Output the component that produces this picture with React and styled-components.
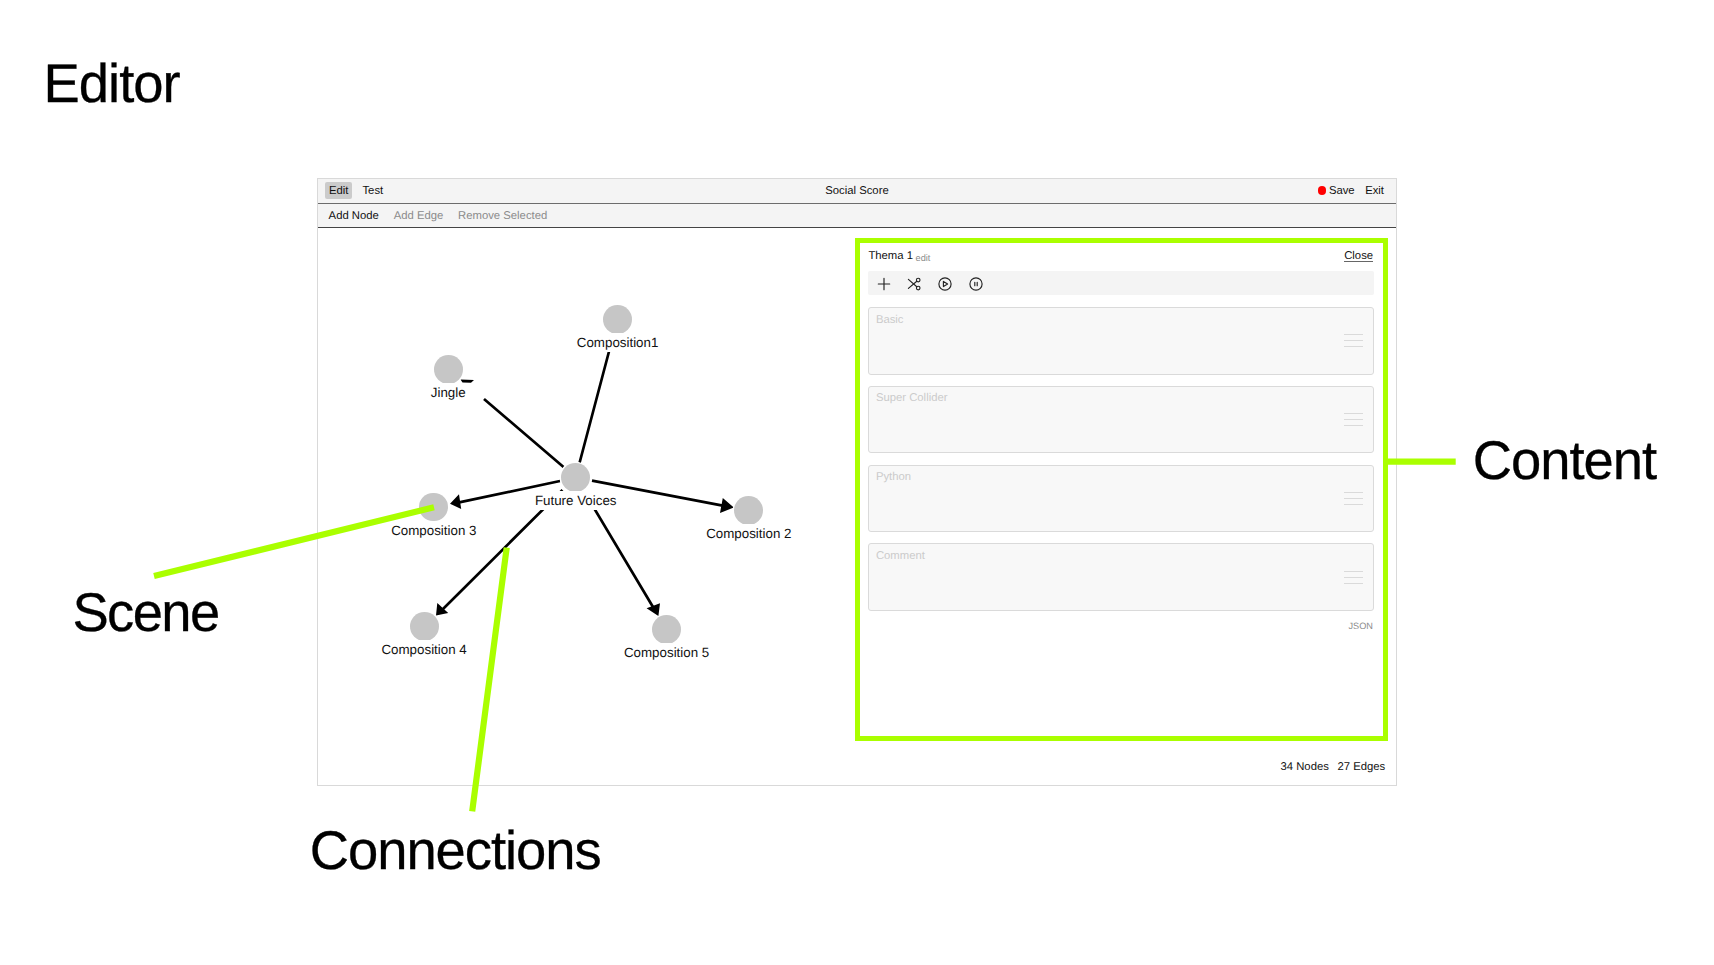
import React from 'react';
import styled, { createGlobalStyle } from 'styled-components';

const LIME = '#aaff00';

const GlobalStyle = createGlobalStyle`
  *, *::before, *::after { box-sizing: border-box; }
  body {
    margin: 0;
    background: #fff;
    overflow: hidden;
    font-family: "Liberation Sans", Arial, Helvetica, sans-serif;
    text-rendering: geometricPrecision;
  }
`;

const Slide = styled.main`
  position: relative;
  width: 1714px;
  height: 965px;
  background: #fff;
  color: #000;
`;

const SlideHeader = styled.header`
  height: 178px;
  padding: 54px 0 0 43.6px;
`;

const SlideTitle = styled.h1`
  margin: 0;
  font-size: 54.4px;
  font-weight: 400;
  line-height: 60px;
  letter-spacing: -1px;
  -webkit-text-stroke: 0.3px #000;
`;

const Callout = styled.div`
  position: absolute;
  left: ${(p) => p.$x}px;
  top: ${(p) => p.$y}px;
  font-size: 54.4px;
  line-height: 60px;
  letter-spacing: ${(p) => p.$tracking}px;
  -webkit-text-stroke: 0.3px #000;
  white-space: nowrap;
`;

const Pointers = styled.svg`
  position: absolute;
  inset: 0;
  width: 1714px;
  height: 965px;
  pointer-events: none;
`;

const Window = styled.section`
  display: flex;
  flex-direction: column;
  width: 1080px;
  height: 608px;
  margin-left: 317px;
  border: 1px solid #d9d9d9;
  background: #fff;
  color: #111;
  font-size: 11.3px;
  line-height: 17px;
`;

const MenuBar = styled.nav`
  display: grid;
  grid-template-columns: 1fr auto 1fr;
  height: 25px;
  padding: 3px 8px 0 7px;
  background: #f4f4f4;
  border-bottom: 1px solid #6c6c6c;
`;

const MenuGroup = styled.div`
  display: flex;
  align-items: flex-start;
  justify-content: ${(p) => (p.$end ? 'flex-end' : 'flex-start')};
`;

const MenuItem = styled.button`
  display: flex;
  align-items: center;
  height: 17px;
  padding: 0 4px;
  margin: 0 0 0 ${(p) => p.$gap || 0}px;
  border: 0;
  border-radius: 2px;
  background: ${(p) => (p.$active ? '#cbcbcb' : 'transparent')};
  color: inherit;
  font: inherit;
`;

const UnsavedDot = styled.span`
  width: 8.5px;
  height: 8.5px;
  margin-right: 2.5px;
  border-radius: 50%;
  background: #ff0000;
`;

const DocumentTitle = styled.span`
  padding: 1px 0 0 1px;
  white-space: nowrap;
`;

const ActionBar = styled.div`
  display: flex;
  align-items: center;
  gap: 14.8px;
  height: 24px;
  padding: 1px 0 0 10.6px;
  background: #f4f4f4;
  border-bottom: 1px solid #444;
`;

const Action = styled.span`
  color: ${(p) => (p.$disabled ? '#8b8b8b' : '#111')};
`;

const Workspace = styled.div`
  display: flex;
  flex: 1;
`;

const Graph = styled.div`
  position: relative;
  width: 537px;
  height: 557px;
`;

const Edges = styled.svg`
  display: block;
  width: 537px;
  height: 557px;
`;

const Node = styled.div`
  position: absolute;
  left: ${(p) => p.$x - 318}px;
  top: ${(p) => p.$y - 228}px;
`;

const NodeDisc = styled.div`
  position: absolute;
  left: -14.4px;
  top: -14.4px;
  width: 28.8px;
  height: 28.8px;
  border-radius: 50%;
  background: #c6c6c6;
  box-shadow: 0 0 0 1.2px #fff;
`;

const NodeLabel = styled.div`
  position: absolute;
  top: 14px;
  transform: translateX(-50%);
  padding: 0 1px;
  background: linear-gradient(transparent 0.4px, #fff 0.4px);
  font-size: 13.35px;
  line-height: 19px;
  white-space: nowrap;
`;

const Side = styled.div`
  display: flex;
  flex-direction: column;
  width: 533px;
  padding-top: 10px;
`;

const Panel = styled.section`
  height: 503px;
  width: 532.6px;
  padding: 5px 9px 0 8.4px;
  border: 5px solid ${LIME};
`;

const PanelHeader = styled.header`
  display: flex;
  justify-content: space-between;
  height: 17px;
`;

const EditLink = styled.span`
  position: relative;
  top: 1.5px;
  margin-left: 2.6px;
  color: #8b8b8b;
  font-size: 9.2px;
`;

const CloseLink = styled.span`
  height: 14px;
  margin-right: 0.5px;
  border-bottom: 1px solid #666;
`;

const ToolStrip = styled.div`
  display: flex;
  align-items: center;
  gap: 14.6px;
  height: 24px;
  margin-top: 6px;
  padding: 1px 0 0 7.4px;
  border-radius: 2px;
  background: #f4f4f4;
`;

const ToolIcon = styled.svg`
  display: block;
  width: 16px;
  height: 16px;
  fill: none;
  stroke: #222;
  stroke-width: 1.15;
  stroke-linecap: round;
  stroke-linejoin: round;
`;

const Cards = styled.div`
  display: flex;
  flex-direction: column;
  gap: 11.3px;
  margin-top: 12.3px;
`;

const Card = styled.article`
  display: flex;
  justify-content: space-between;
  height: 67.4px;
  padding: 3.4px 10px 0 6.5px;
  border: 1px solid #dadada;
  border-radius: 3px;
  background: #f8f8f8;
  color: #cbcbcb;
`;

const DragHandle = styled.span`
  display: flex;
  flex-direction: column;
  justify-content: space-between;
  width: 19px;
  height: 13px;
  margin-top: 22.8px;

  i {
    height: 1px;
    background: #dadada;
  }
`;

const FormatLabel = styled.div`
  margin-top: 7.5px;
  padding-right: 0.6px;
  color: #8b8b8b;
  font-size: 9.2px;
  text-align: right;
`;

const StatusBar = styled.footer`
  display: flex;
  justify-content: flex-end;
  gap: 8.6px;
  margin-top: 17.5px;
  padding-right: 2.8px;
`;

const scenes = [
  { name: 'Composition1', x: 617.6, y: 319.3 },
  { name: 'Jingle', x: 448.2, y: 369.2 },
  { name: 'Composition 3', x: 433.8, y: 507 },
  { name: 'Composition 2', x: 748.8, y: 510.4 },
  { name: 'Composition 4', x: 424.1, y: 626.4 },
  { name: 'Composition 5', x: 666.6, y: 629.4 },
  { name: 'Future Voices', x: 575.7, y: 477.3 },
];

const blocks = ['Basic', 'Super Collider', 'Python', 'Comment'];

function GraphView() {
  return (
    <Graph>
      <Edges viewBox="318 228 537 557">
        <g stroke="#000" strokeWidth="2.7">
          <path d="M609 351.5 579.5 463M484 399 563.5 467M560 481 458 502.6M592 480.6 724 505.8M562.5 490 443 609M588 498 653 607" />
        </g>
        <path d="M450 503.8 459 494.3 461.2 509ZM733.8 507.5 722.8 498 720 512.9ZM436 615.4 437.3 603 448.2 612.9ZM658.4 616 646.6 608.3 660 603.3ZM460.5 379.6 474 380 471 382.8 462.5 382.6Z" />
      </Edges>
      {scenes.map((s) => (
        <Node key={s.name} $x={s.x} $y={s.y}>
          <NodeDisc />
          <NodeLabel>{s.name}</NodeLabel>
        </Node>
      ))}
    </Graph>
  );
}

function Tools() {
  return (
    <ToolStrip>
      <ToolIcon viewBox="0 0 16 16">
        <path d="M8 2.3v11.4M2.3 8h11.4" />
      </ToolIcon>
      <ToolIcon viewBox="0 0 16 16">
        <circle cx="12.2" cy="4" r="1.8" />
        <circle cx="12.2" cy="12" r="1.8" />
        <path d="M2.4 3.4 10.8 10.8M2.4 12.4 10.8 5.2" />
      </ToolIcon>
      <ToolIcon viewBox="0 0 16 16">
        <circle cx="8" cy="8" r="6.1" />
        <path d="M6.4 5.4v5.2L10.6 8Z" />
      </ToolIcon>
      <ToolIcon viewBox="0 0 16 16">
        <circle cx="8" cy="8" r="6.1" />
        <path d="M6.8 6.3v3.4M9.2 6.3v3.4" />
      </ToolIcon>
    </ToolStrip>
  );
}

function ContentPanel() {
  return (
    <Panel>
      <PanelHeader>
        <span>
          Thema 1<EditLink>edit</EditLink>
        </span>
        <CloseLink>Close</CloseLink>
      </PanelHeader>
      <Tools />
      <Cards>
        {blocks.map((b) => (
          <Card key={b}>
            <span>{b}</span>
            <DragHandle>
              <i />
              <i />
              <i />
            </DragHandle>
          </Card>
        ))}
      </Cards>
      <FormatLabel>JSON</FormatLabel>
    </Panel>
  );
}

export default function App() {
  return (
    <>
      <GlobalStyle />
      <Slide>
        <SlideHeader>
          <SlideTitle>Editor</SlideTitle>
        </SlideHeader>
        <Window>
          <MenuBar>
            <MenuGroup>
              <MenuItem $active>Edit</MenuItem>
              <MenuItem $gap={6}>Test</MenuItem>
            </MenuGroup>
            <DocumentTitle>Social Score</DocumentTitle>
            <MenuGroup $end>
              <MenuItem>
                <UnsavedDot />
                Save
              </MenuItem>
              <MenuItem $gap={2.5}>Exit</MenuItem>
            </MenuGroup>
          </MenuBar>
          <ActionBar>
            <Action>Add Node</Action>
            <Action $disabled>Add Edge</Action>
            <Action $disabled>Remove Selected</Action>
          </ActionBar>
          <Workspace>
            <GraphView />
            <Side>
              <ContentPanel />
              <StatusBar>
                <span>34 Nodes</span>
                <span>27 Edges</span>
              </StatusBar>
            </Side>
          </Workspace>
        </Window>
        <Pointers viewBox="0 0 1714 965">
          <path
            d="M154 576 434 507.3M506.7 547.7 472.2 811.3M1387 461.7H1455.7"
            fill="none"
            stroke={LIME}
            strokeWidth="6.2"
          />
        </Pointers>
        <Callout $x={72.4} $y={583} $tracking={-1.6}>Scene</Callout>
        <Callout $x={309.8} $y={821} $tracking={-1.05}>Connections</Callout>
        <Callout $x={1472.8} $y={431} $tracking={-1.05}>Content</Callout>
      </Slide>
    </>
  );
}
